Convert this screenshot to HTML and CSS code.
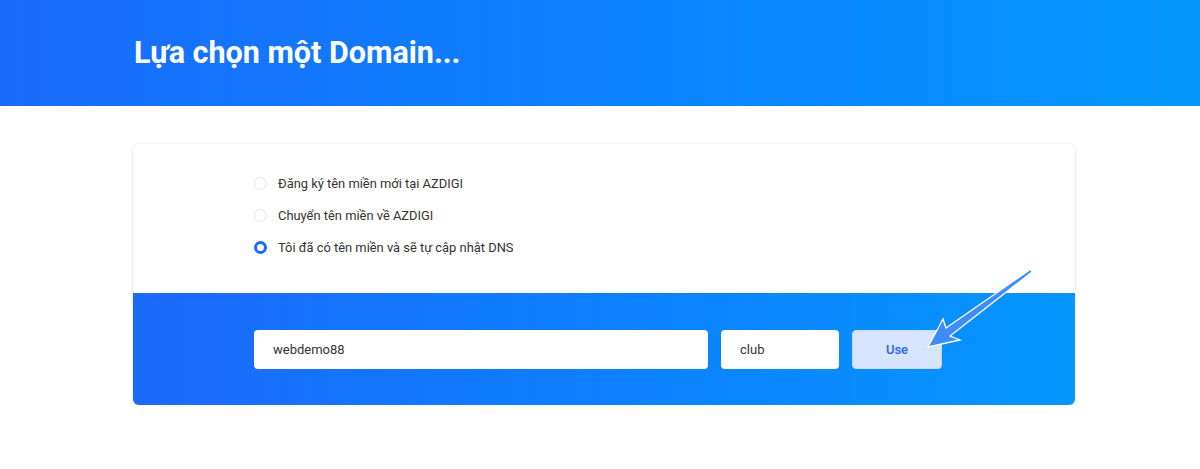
FILE: index.html
```html
<!DOCTYPE html>
<html lang="vi">
<head>
  <meta charset="UTF-8" />
  <meta name="viewport" content="width=device-width, initial-scale=1.0"/>
  <title>Lựa chọn một Domain</title>
  <link rel="stylesheet" href="styles.css">
</head>
<body>
  <header class="page-header">
    <div class="container">
      <h1>Lựa chọn một Domain...</h1>
    </div>
  </header>

  <div class="container">
    <div class="domain-card">
      <div class="domain-options">
        <label class="option">
          <span class="radio"></span>
          <span>Đăng ký tên miền mới tại AZDIGI</span>
        </label>
        <label class="option">
          <span class="radio"></span>
          <span>Chuyển tên miền về AZDIGI</span>
        </label>
        <label class="option">
          <span class="radio checked"></span>
          <span>Tôi đã có tên miền và sẽ tự cập nhật DNS</span>
        </label>
      </div>

      <div class="domain-form">
        <div class="field sld">webdemo88</div>
        <div class="field tld">club</div>
        <button class="use-btn">Use</button>
      </div>

      <!-- mũi tên chỉ vào nút -->
      <svg class="pointer-arrow" width="130" height="100" viewBox="910 260 130 100">
        <polygon points="928,347 943,319 946,328 1031,269 1032,272 950,336 960,340" fill="#3e8cff" stroke="#ffffff" stroke-width="1.3" stroke-linejoin="miter"/>
      </svg>
    </div>
  </div>
</body>
</html>
```

FILE: styles.css
```css
body {
  margin: 0;
  font-family: Roboto, "Noto Sans", Arial, sans-serif;
  background: #fff;
  color: #333;
}

.container {
  width: 942px;
  margin-left: 133px;
}

.page-header {
  height: 106px;
  background: linear-gradient(90deg, #1a6bfb 0%, #0a84fe 55%, #0597fe 100%);
  display: flex;
  align-items: center;
}

.page-header h1 {
  margin: 0 0 2px 1px;
  color: #fff;
  font-size: 30.5px;
  font-weight: 700;
}

.domain-card {
  position: relative;
  margin-top: 38px;
  border-radius: 6px;
  background: #fff;
  box-shadow: 0 0 3px rgba(0,0,0,0.08), 0 1px 4px rgba(0,0,0,0.06);
}

.domain-options {
  height: 149px;
  padding: 29px 0 0 121px;
  box-sizing: border-box;
  display: flex;
  flex-direction: column;
  gap: 12px;
}

.option {
  display: flex;
  align-items: center;
  gap: 11px;
  height: 20px;
  font-size: 12.9px;
  color: #333;
}

.radio {
  width: 13px;
  height: 13px;
  border-radius: 50%;
  border: 1px solid #e3e3e3;
  box-sizing: border-box;
  background: #fff;
}

.radio.checked {
  border: 3.5px solid #1a6bfb;
}

.domain-form {
  height: 112px;
  box-sizing: border-box;
  padding: 37px 0 0 121px;
  display: flex;
  gap: 13px;
  border-radius: 0 0 6px 6px;
  background: linear-gradient(90deg, #1c69fb 0%, #0d80fe 50%, #0596fe 100%);
}

.field {
  height: 39px;
  box-sizing: border-box;
  background: #fff;
  border-radius: 4px;
  padding-left: 19px;
  display: flex;
  align-items: center;
  font-size: 13px;
  color: #333;
}

.sld {
  width: 454px;
}

.tld {
  width: 118px;
}

.use-btn {
  width: 90px;
  height: 39px;
  border: 1px solid #c9dafc;
  border-radius: 4px;
  background: #d6e4fd;
  color: #2a66ea;
  font-family: inherit;
  font-size: 13px;
  font-weight: 500;
  cursor: pointer;
}

.pointer-arrow {
  position: absolute;
  left: 777px;
  top: 116px;
}
```
